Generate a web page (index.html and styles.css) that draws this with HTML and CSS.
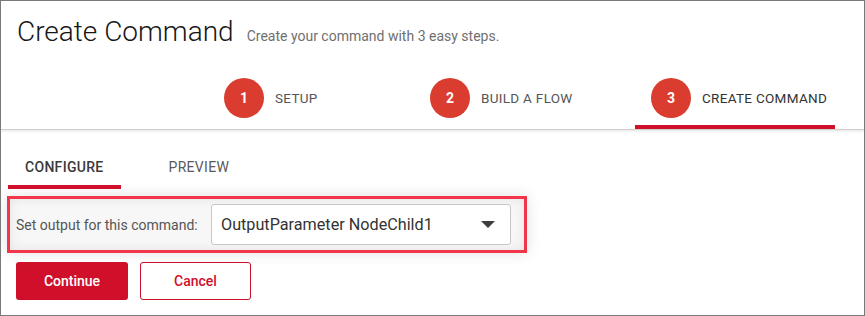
FILE: index.html
```html
<!DOCTYPE html>
<html lang="en">
<head>
  <meta charset="UTF-8" />
  <meta name="viewport" content="width=device-width, initial-scale=1.0" />
  <title>Create Command</title>
  <link rel="stylesheet" href="styles.css">
</head>
<body>
  <div class="frame">
    <div class="header">
      <div class="title-row">
        <h1>Create Command</h1>
        <span class="subtitle">Create your command with 3 easy steps.</span>
      </div>
      <div class="steps">
        <div class="step"><span class="num">1</span><span class="step-label">Setup</span></div>
        <div class="step"><span class="num">2</span><span class="step-label">Build a Flow</span></div>
        <div class="step active"><span class="num">3</span><span class="step-label">Create Command</span></div>
      </div>
    </div>

    <div class="content">
      <div class="tabs">
        <div class="tab active">Configure</div>
        <div class="tab">Preview</div>
      </div>

      <div class="output-row">
        <label class="output-label">Set output for this command:</label>
        <div class="select">
          <span>OutputParameter NodeChild1</span>
          <span class="caret"></span>
        </div>
      </div>

      <div class="actions">
        <button class="btn primary">Continue</button>
        <button class="btn secondary">Cancel</button>
      </div>
    </div>
  </div>
</body>
</html>
```

FILE: styles.css
```css
:root {
  --red: #d0102b;
  --step-red: #da3c2f;
  --text: #2c2c2c;
}
* { margin: 0; padding: 0; box-sizing: border-box; }
body {
  font-family: Roboto, 'Liberation Sans', sans-serif;
  background: #fff;
  color: var(--text);
}
.frame {
  width: 865px;
  height: 316px;
  border: 1px solid #7a7a7a;
  overflow: hidden;
  background: #fff;
}
.header {
  border-bottom: 1px solid #cfcfcf;
  box-shadow: 0 1px 3px rgba(0, 0, 0, 0.12);
  position: relative;
}
.title-row {
  display: flex;
  align-items: baseline;
  gap: 13px;
  padding: 13px 0 0 16px;
  height: 67px;
}
h1 {
  font-size: 28px;
  font-weight: 300;
  line-height: 36px;
  color: #161616;
}
.subtitle {
  font-size: 14px;
  color: #6f6f6f;
}
.steps {
  display: grid;
  grid-template-columns: 206px 221px 200px;
  justify-content: end;
  padding-right: 29px;
}
.step {
  display: flex;
  align-items: center;
  gap: 11px;
  padding: 10px 16px 7px;
  border-bottom: 4px solid transparent;
  white-space: nowrap;
}
.step.active { border-bottom-color: var(--red); }
.num {
  flex: none;
  width: 40px;
  height: 40px;
  border-radius: 50%;
  background: var(--step-red);
  color: #fff;
  font-weight: 700;
  font-size: 14px;
  display: flex;
  align-items: center;
  justify-content: center;
}
.step-label {
  font-size: 13.5px;
  text-transform: uppercase;
  letter-spacing: 0.3px;
  color: #565656;
}
.step.active .step-label { color: #333; }

.content { padding: 0 0 0 6px; }
.tabs {
  display: flex;
  gap: 31px;
  padding-left: 1px;
}
.tab {
  padding: 29px 17px 10px;
  line-height: 16px;
  font-size: 14px;
  text-transform: uppercase;
  letter-spacing: 0.3px;
  color: #5a5a5a;
  border-bottom: 4px solid transparent;
}
.tab.active {
  color: #3a3a3a;
  font-weight: 500;
  border-bottom-color: var(--red);
}
.output-row {
  margin-top: 7px;
  width: 520px;
  border: 3px solid #f23548;
  padding: 5px 13px 5px 6px;
  display: flex;
  align-items: center;
  justify-content: space-between;
  background: #f7f7f7;
  box-shadow: 0 0 14px rgba(0, 0, 0, 0.12), inset 0 0 12px rgba(0, 0, 0, 0.08);
}
.output-label {
  font-size: 14px;
  color: #555;
}
.select {
  width: 300px;
  height: 41px;
  border: 1px solid #c8c8c8;
  border-radius: 3px;
  background: #fff;
  display: flex;
  align-items: center;
  justify-content: space-between;
  padding: 0 15px 0 9px;
  font-size: 16.2px;
  color: #333;
}
.caret {
  width: 0;
  height: 0;
  border-left: 7px solid transparent;
  border-right: 7px solid transparent;
  border-top: 7px solid #3d3d3d;
}
.actions {
  display: flex;
  gap: 12px;
  margin: 9px 0 0 9px;
}
.btn {
  height: 38px;
  border-radius: 3px;
  font-family: inherit;
  font-size: 14px;
  font-weight: 500;
  cursor: pointer;
}
.primary {
  width: 112px;
  background: var(--red);
  color: #fff;
  border: none;
}
.secondary {
  width: 111px;
  background: #fff;
  color: var(--red);
  border: 1px solid var(--red);
}
```
